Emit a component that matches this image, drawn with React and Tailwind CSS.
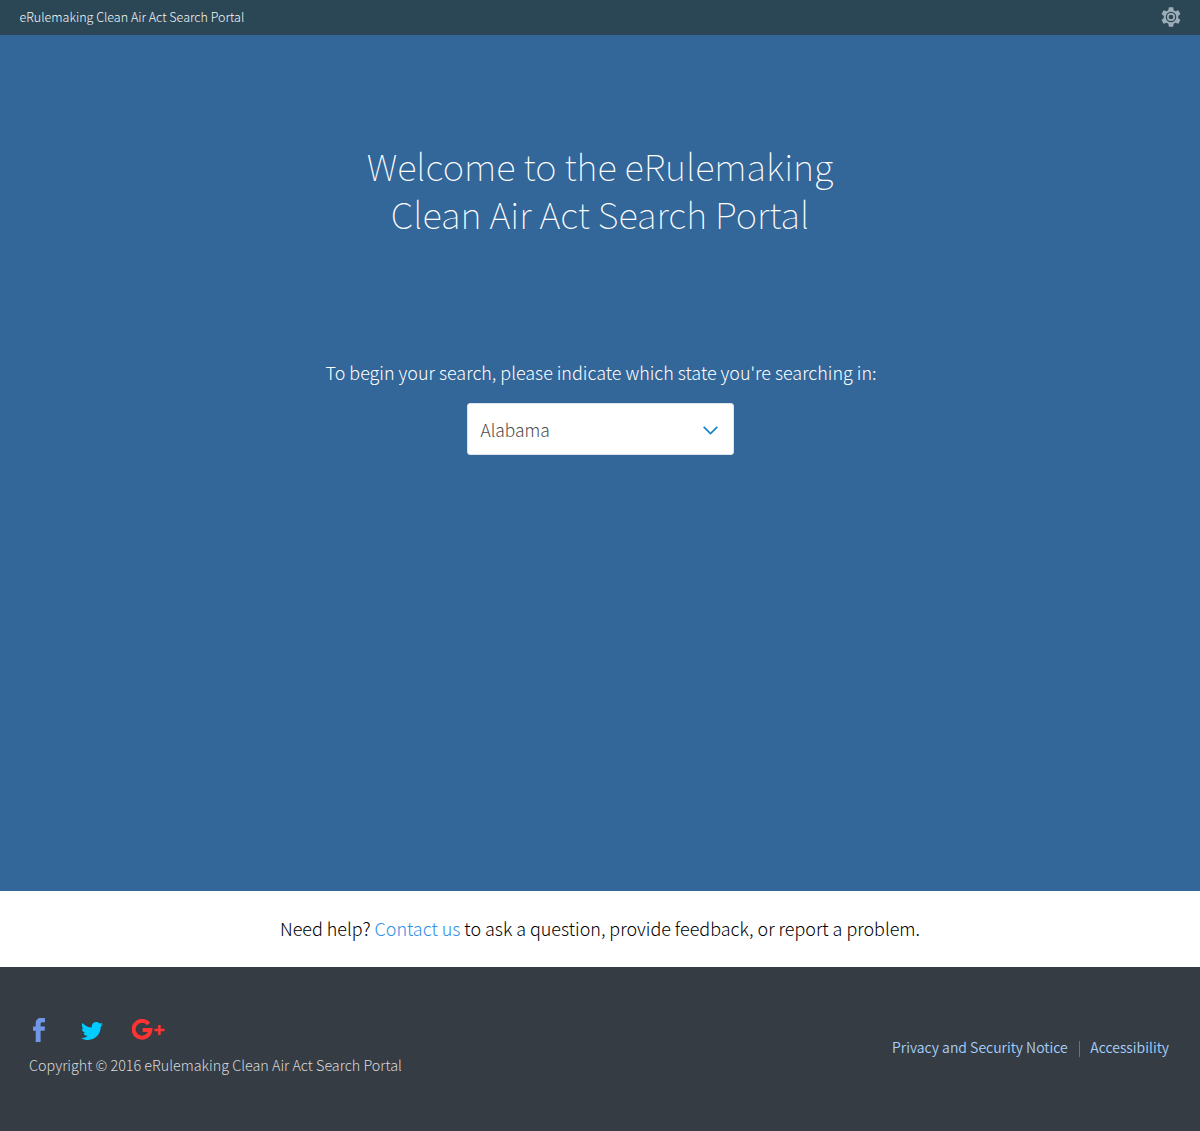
import { FaTwitter } from "react-icons/fa";

function Gear() {
  const teeth = [0, 60, 120, 180, 240, 300];
  return (
    <svg width="20" height="20" viewBox="-10 -10 20 20" fill="none" stroke="currentColor">
      <circle r="6.3" strokeWidth="2" />
      <circle r="3.2" strokeWidth="1.7" />
      {teeth.map((a) => (
        <path key={a} d="M-2.7 -6.6 L-2.1 -9.7 H2.1 L2.7 -6.6 Z" fill="currentColor" stroke="none" transform={`rotate(${a})`} />
      ))}
    </svg>
  );
}

export default function App() {
  return (
    <div className="flex h-[1131px] w-full flex-col bg-[#336699] font-['Noto_Sans_CJK_SC',sans-serif]">
      <header className="flex h-[35px] items-center justify-between bg-[#2b4755] pl-[19.5px] pr-[19.5px]">
        <span className="whitespace-nowrap text-[12.53px] font-light text-[#f4f6f7]">eRulemaking Clean Air Act Search Portal</span>
        <button className="-mt-px text-[#9eaeb8]" aria-label="Settings"><Gear /></button>
      </header>
      <main className="flex h-[856px] flex-col items-center bg-[#336699] pt-[106px] text-white">
        <h1 className="text-center text-[36.3px] font-thin leading-[48px]">
          <span className="block">Welcome to the eRulemaking</span>
          <span className="block">Clean Air Act Search Portal</span>
        </h1>
        <p className="mt-[120px] pl-[2px] text-[17.93px] font-light leading-[30px]">To begin your search, please indicate which state you're searching in:</p>
        <button className="mt-[16px] flex h-[52px] w-[267px] items-center justify-between rounded-[3px] border border-[#dfe3e8] bg-white pl-[13px] pr-[15px] text-[17.4px] font-light text-[#4c4c4c]">
          <span className="mt-[2px]">Alabama</span>
          <svg className="mt-[2px]" width="15" height="9" viewBox="0 0 15 9" fill="none" stroke="#1484c6" strokeWidth="1.7"><path d="M.7 .8 7.5 7.6 14.3 .8" /></svg>
        </button>
      </main>
      <section className="flex h-[76px] items-center justify-center bg-white pb-[2px] text-[17.93px] font-light text-black">
        <p>Need help? <a className="text-[#2f8fe8]">Contact us</a> to ask a question, provide feedback, or report a problem.</p>
      </section>
      <footer className="flex h-[164px] justify-between bg-[#353c43] pl-[29px] pr-[31px]">
        <div className="pt-[49px]">
          <div className="flex h-[26px] items-center">
            <svg className="ml-[4px] mt-px" width="12" height="24" viewBox="0 0 12 24" fill="#7197e8" aria-label="Facebook">
              <path d="M2.7 24V12.8H0V8.4H2.7V5.5C2.7 2 4.6 0 8 0H12V4.2H9.5C8 4.2 7.6 4.9 7.6 6V8.4H12L11.6 12.8H7.6V24Z" />
            </svg>
            <FaTwitter className="ml-[36px] mt-[3px] size-[22px] text-[#00ccff]" />
            <svg className="ml-[29px] mt-px" width="33" height="22" viewBox="0 0 33 22" fill="none" stroke="#ff3333" aria-label="Google Plus">
              <path d="M16.6 5A8.4 8.4 0 1 0 18.4 10.9H10.6" strokeWidth="4" />
              <path d="M27.4 6V16M22.4 11H32.6" strokeWidth="2.6" />
            </svg>
          </div>
          <p className="mt-[9px] text-[14.35px] font-light leading-[28px] text-[#d8dadc]">Copyright © 2016 eRulemaking Clean Air Act Search Portal</p>
        </div>
        <nav className="flex h-[161px] items-center text-[14px] font-[350] text-[#a8d0fa]">
          <a>Privacy and Security Notice</a>
          <span className="ml-[11.5px] mr-[10px] mt-[2px] h-4 w-px bg-[#6c7278]" />
          <a>Accessibility</a>
        </nav>
      </footer>
    </div>
  );
}
